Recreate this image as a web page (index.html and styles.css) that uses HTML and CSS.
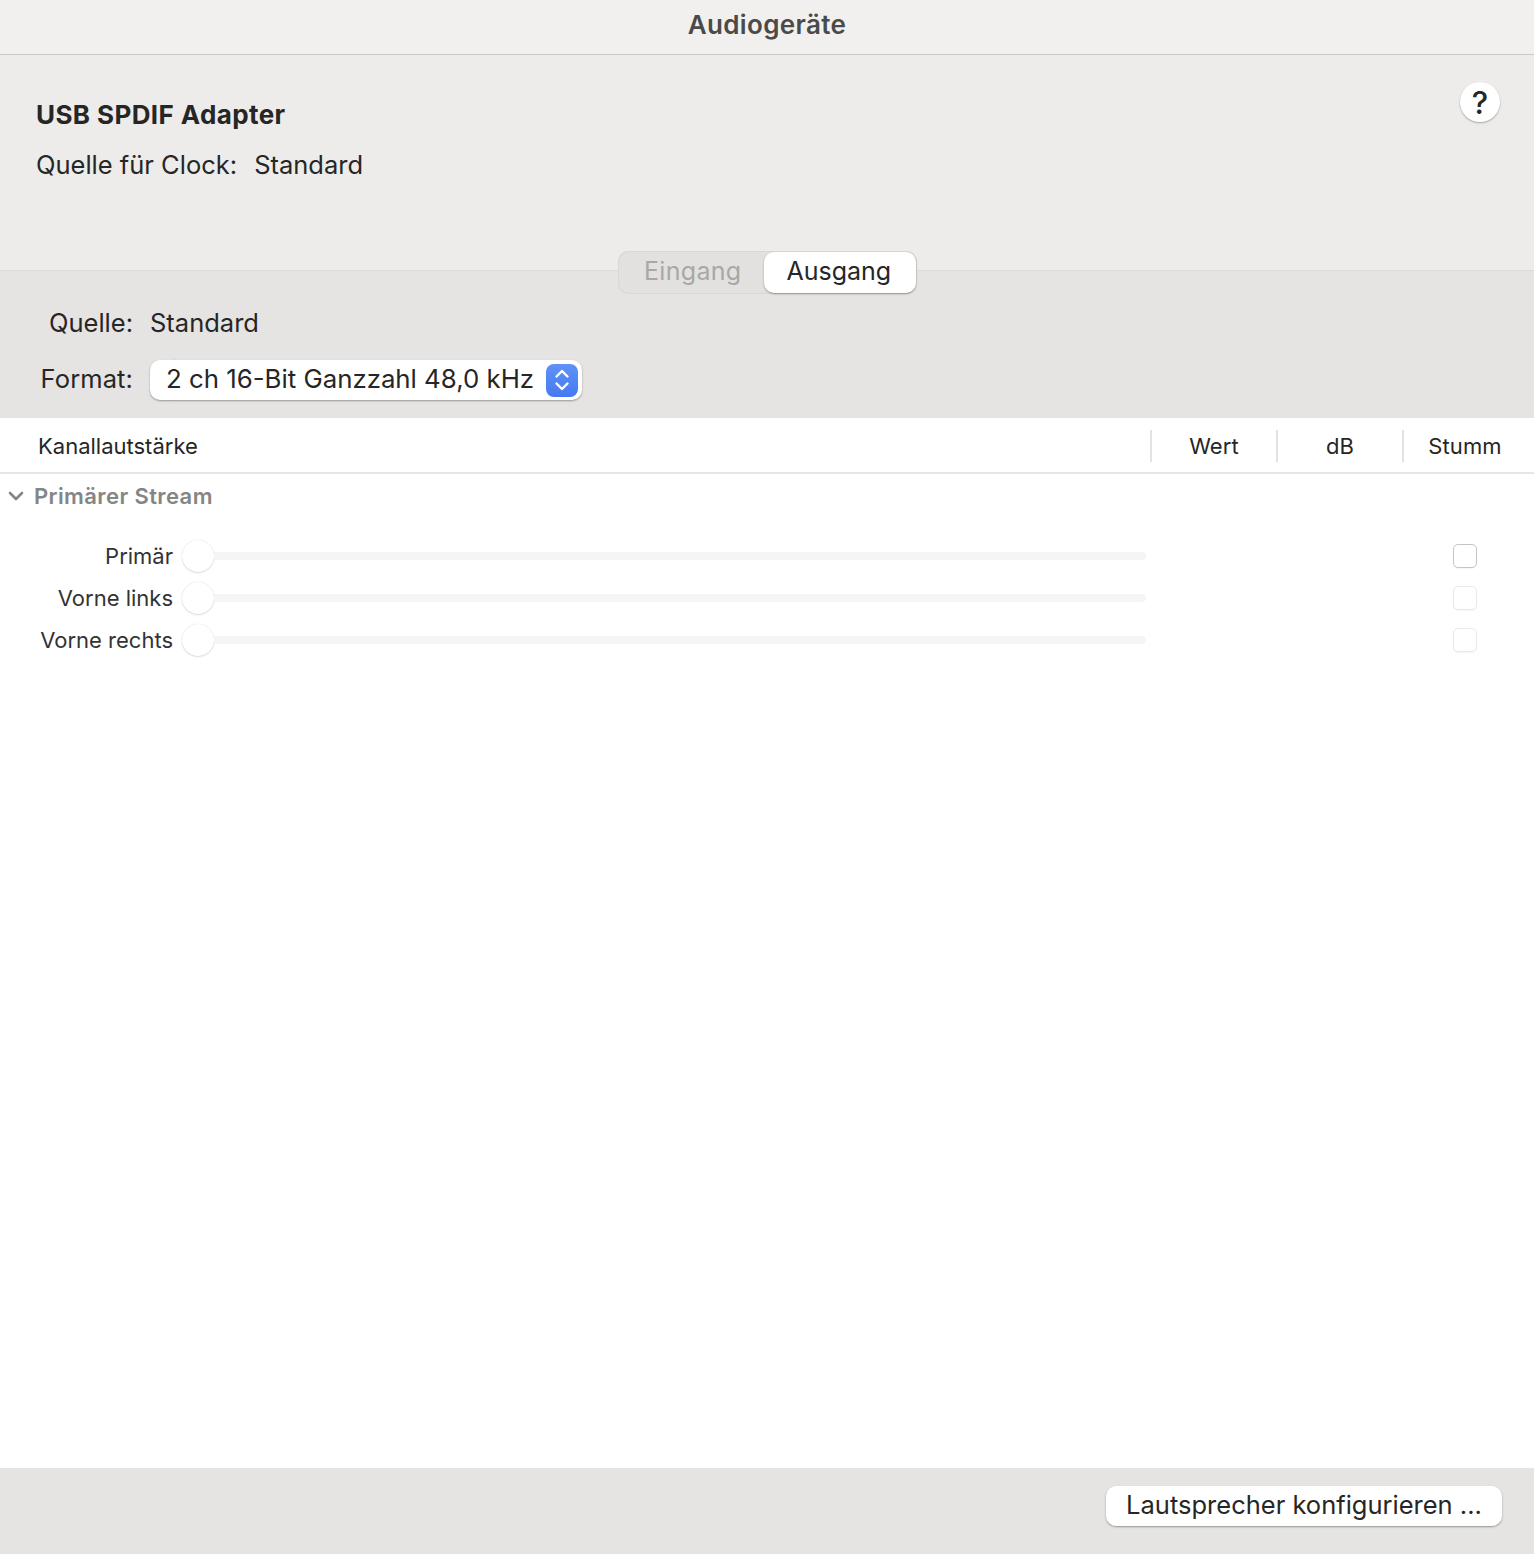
FILE: index.html
```html
<!DOCTYPE html>
<html lang="de">
<head>
  <meta charset="UTF-8" />
  <title>Audiogeräte</title>
  <link rel="stylesheet" href="styles.css">
</head>
<body>
  <div class="window">
    <header class="titlebar">Audiogeräte</header>

    <section class="device">
      <div class="device-info">
        <h1 class="device-name">USB SPDIF Adapter</h1>
        <div class="clock"><span>Quelle für Clock:</span><span>Standard</span></div>
      </div>
      <button class="help">?</button>
    </section>

    <section class="stream">
      <div class="tabs">
        <div class="tab">Eingang</div>
        <div class="tab active">Ausgang</div>
      </div>
      <div class="stream-row source">
        <span class="stream-label">Quelle:</span>
        <span>Standard</span>
      </div>
      <div class="stream-row format">
        <span class="stream-label">Format:</span>
        <div class="select">
          <span>2 ch 16-Bit Ganzzahl 48,0 kHz</span>
          <span class="select-arrows">
            <svg width="16" height="26" viewBox="0 0 16 26" fill="none" stroke="#fff" stroke-width="2.4" stroke-linecap="round" stroke-linejoin="round"><path d="M2.5 9.5 8 4l5.5 5.5"/><path d="M2.5 16.5 8 22l5.5-5.5"/></svg>
          </span>
        </div>
      </div>
    </section>

    <main class="channels">
      <div class="table-head">
        <div class="col-name">Kanallautstärke</div>
        <div class="col">Wert</div>
        <div class="col">dB</div>
        <div class="col">Stumm</div>
      </div>
      <div class="group">
        <svg class="chevron" width="16" height="10" viewBox="0 0 16 10" fill="none" stroke="#858585" stroke-width="2.6" stroke-linecap="round" stroke-linejoin="round"><path d="M2 2l6 6 6-6"/></svg>
        <span>Primärer Stream</span>
      </div>
      <div class="rows">
        <div class="row">
          <span class="row-label">Primär</span>
          <div class="slider"><span class="knob"></span><span class="track"></span></div>
          <span class="check strong"></span>
        </div>
        <div class="row">
          <span class="row-label">Vorne links</span>
          <div class="slider"><span class="knob"></span><span class="track"></span></div>
          <span class="check"></span>
        </div>
        <div class="row">
          <span class="row-label">Vorne rechts</span>
          <div class="slider"><span class="knob"></span><span class="track"></span></div>
          <span class="check"></span>
        </div>
      </div>
    </main>

    <footer class="bottom">
      <button class="config">Lautsprecher konfigurieren ...</button>
    </footer>
  </div>
</body>
</html>
```

FILE: styles.css
```css
* {
  box-sizing: border-box;
}
body {
  margin: 0;
  font-family: Inter, "Liberation Sans", sans-serif;
  color: #262626;
  background-color: #fff;
}
.window {
  display: flex;
  flex-direction: column;
  height: 1554px;
}
.titlebar {
  height: 55px;
  padding-top: 9px;
  background-color: #f1f0ef;
  border-bottom: 1px solid #c9c9c8;
  text-align: center;
  font-size: 26px;
  line-height: 32px;
  font-weight: 600;
  letter-spacing: 0.35px;
  color: #4a4a4a;
}
.device {
  display: flex;
  justify-content: space-between;
  height: 216px;
  padding: 27px 34px 0 36px;
  background-color: #edecea;
  border-bottom: 1px solid #dcdbd9;
}
.device-name {
  margin: 15px 0 0;
  font-size: 26px;
  line-height: 36px;
  font-weight: 700;
  letter-spacing: 0.4px;
}
.clock {
  display: flex;
  gap: 17px;
  margin-top: 14px;
  font-size: 25.5px;
  line-height: 36px;
}
.help {
  width: 40px;
  height: 40px;
  padding: 0;
  border: none;
  border-radius: 50%;
  background-color: #fff;
  box-shadow: 0 1px 2px rgba(0, 0, 0, 0.3);
  font-family: inherit;
  font-size: 31px;
  font-weight: 500;
  color: #262626;
}
.stream {
  height: 147px;
  background-color: #e5e4e2;
}
.tabs {
  display: flex;
  width: 299px;
  height: 43px;
  margin: -20px auto 0;
  padding: 1px;
  border-radius: 11px;
  background-color: #e2e1df;
  box-shadow: inset 0 0 0 1px #d9d8d6;
  font-size: 25px;
}
.tab {
  width: 145px;
  padding-left: 4px;
  line-height: 39px;
  text-align: center;
  letter-spacing: 0.3px;
  color: #a8a8a7;
}
.tab.active {
  width: 152px;
  height: 41px;
  margin-left: 1px;
  padding: 0 2px 0 0;
  border-radius: 10px;
  background-color: #fff;
  box-shadow: 0 1px 2px rgba(0, 0, 0, 0.35);
  letter-spacing: 0;
  color: #262626;
}
.stream-row {
  display: flex;
  align-items: center;
  font-size: 25.5px;
}
.stream-label {
  width: 133px;
  margin-right: 17px;
  text-align: right;
}
.source {
  height: 36px;
  margin-top: 10px;
}
.format {
  margin-top: 20px;
}
.format .stream-label {
  padding-bottom: 3px;
  letter-spacing: 0.1px;
}
.select {
  position: relative;
  display: flex;
  align-items: center;
  justify-content: space-between;
  width: 432px;
  height: 40px;
  padding: 0 4px 3px 16px;
  border-radius: 10px;
  background-color: #fff;
  box-shadow: 0 1px 2px rgba(0, 0, 0, 0.35);
  font-size: 25.8px;
}
.select::before,
.select::after {
  content: "";
  position: absolute;
  left: 24px;
  width: 1px;
  height: 2px;
  background-color: #d4d4d2;
}
.select::before {
  top: -2px;
}
.select::after {
  bottom: -3px;
}
.select-arrows {
  display: flex;
  align-items: center;
  justify-content: center;
  width: 32px;
  height: 33px;
  margin-top: 3px;
  border-radius: 8px;
  background: linear-gradient(#5f93f8, #4479f3);
}
.channels {
  flex: 1;
  background-color: #fff;
}
.table-head {
  display: flex;
  align-items: center;
  height: 56px;
  border-bottom: 2px solid #e6e6e6;
  font-size: 22px;
  padding-top: 2px;
}
.col-name {
  width: 1150px;
  padding-left: 38px;
}
.col {
  width: 126px;
  height: 32px;
  line-height: 32px;
  text-align: center;
  border-left: 2px solid #e2e2e2;
  letter-spacing: 0.1px;
}
.col:last-child {
  padding-right: 2px;
}
.group {
  display: flex;
  align-items: center;
  gap: 10px;
  height: 44px;
  padding-left: 8px;
  font-size: 22px;
  font-weight: 600;
  letter-spacing: 0.4px;
  color: #858585;
}
.rows {
  display: flex;
  flex-direction: column;
  gap: 10px;
  margin-top: 22px;
}
.row {
  display: flex;
  align-items: center;
  height: 32px;
  font-size: 22px;
}
.row-label {
  width: 173px;
  text-align: right;
  color: #333;
}
.slider {
  display: flex;
  align-items: center;
  width: 964px;
  margin-left: 9px;
}
.knob {
  flex: none;
  width: 32px;
  height: 32px;
  border-radius: 50%;
  background-color: #fff;
  box-shadow: 0 0 1px rgba(0, 0, 0, 0.18), 0 1px 2px rgba(0, 0, 0, 0.12);
}
.track {
  flex: 1;
  height: 8px;
  border-radius: 0 4px 4px 0;
  background-color: #f5f5f5;
}
.check {
  width: 24px;
  height: 24px;
  margin-left: 307px;
  border: 1px solid #e9e9e9;
  border-radius: 5px;
  background-color: #fff;
  box-shadow: 0 1px 1px rgba(0, 0, 0, 0.04);
}
.check.strong {
  border-color: #c4c4c4;
}
.bottom {
  display: flex;
  justify-content: flex-end;
  height: 86px;
  padding: 18px 32px 0 0;
  background-color: #e5e4e2;
}
.config {
  width: 396px;
  height: 40px;
  padding: 0 0 4px;
  border: none;
  border-radius: 10px;
  background-color: #fff;
  box-shadow: 0 1px 2px rgba(0, 0, 0, 0.35);
  font-family: inherit;
  font-size: 25.5px;
  color: #262626;
}
```
